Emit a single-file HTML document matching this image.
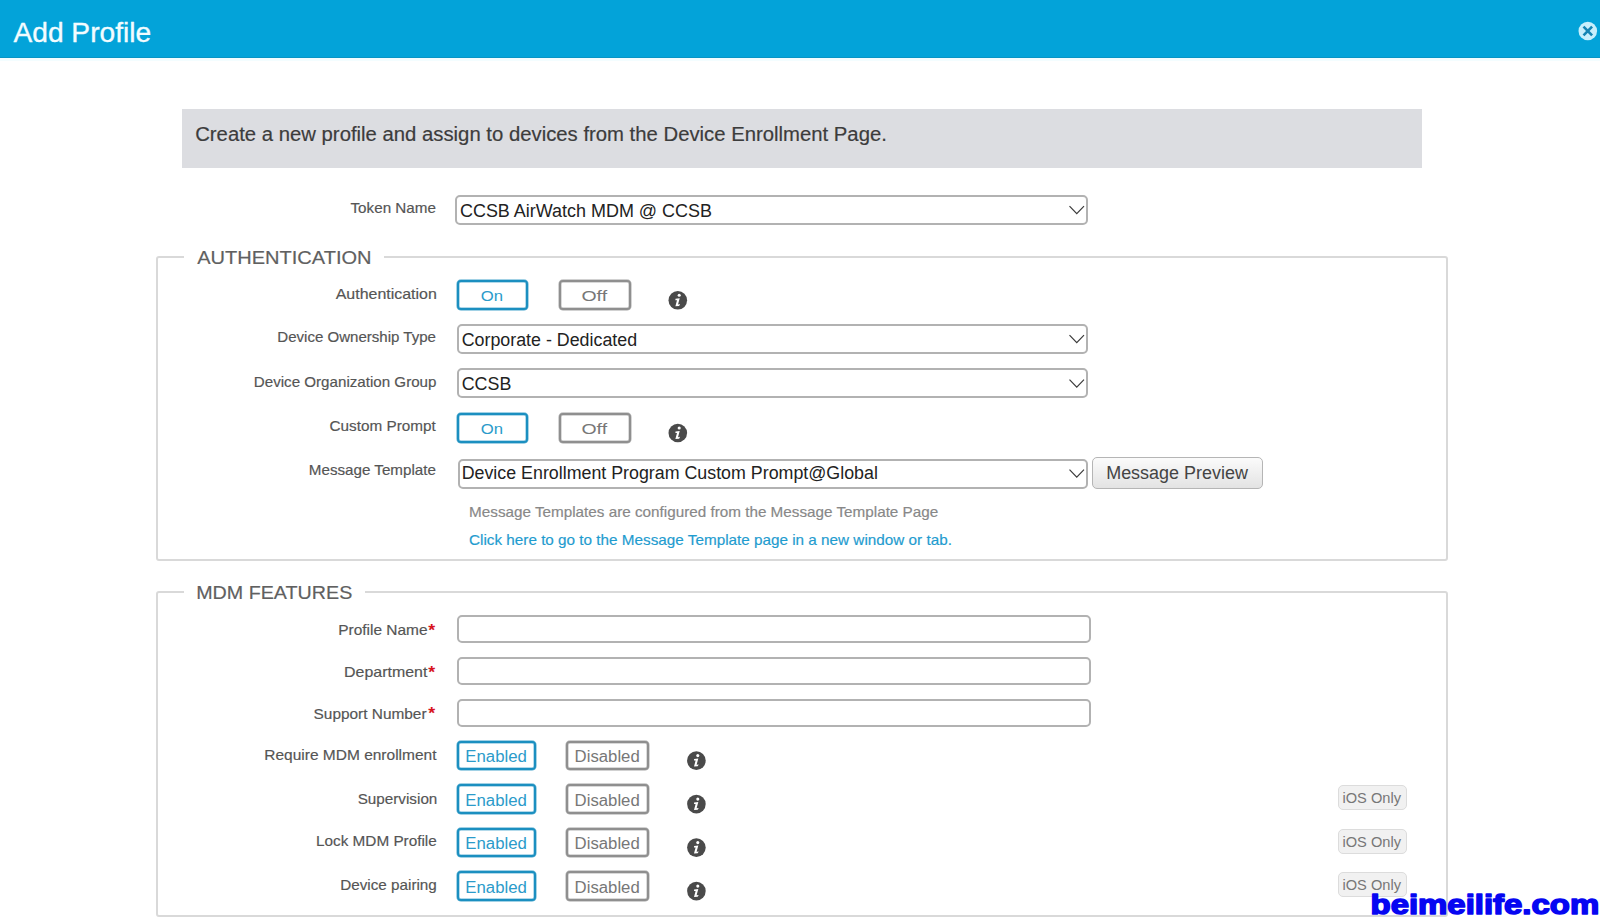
<!DOCTYPE html>
<html><head><meta charset="utf-8"><title>Add Profile</title><style>
html,body{margin:0;padding:0;width:1600px;height:920px;overflow:hidden;background:#fff;position:relative;font-family:"Liberation Sans",sans-serif}
.hdr{position:absolute;left:0;top:0;width:1600px;height:58px;background:#03a3d9;box-sizing:border-box;border-bottom:1px solid #0894c4}
.glow{position:absolute;left:0;top:58px;width:1600px;height:3px;background:#f3fdff}
.banner{position:absolute;left:182px;top:108.5px;width:1239.5px;height:59px;background:#dcdde1}
.sel,.inp{position:absolute;box-sizing:border-box;border:2px solid #b2b2b2;border-radius:5px;background:#fff}
.fs{position:absolute;box-sizing:border-box;border:2px solid #d9d9d9;border-radius:3px}
.gap{position:absolute;background:#fff}
.tg{position:absolute;box-sizing:border-box;border:2px solid #8f8f8f;border-radius:4px;background:#fff;box-shadow:0 0 0 0.7px rgba(143,143,143,.55),inset 0 0 0 0.7px rgba(143,143,143,.45)}
.tg.on{border-color:#1b8fc0;box-shadow:0 0 0 0.7px rgba(27,143,192,.55),inset 0 0 0 0.7px rgba(27,143,192,.45)}
.btn{position:absolute;box-sizing:border-box;border:1.5px solid #b5b5b5;border-radius:5px;background:linear-gradient(#fbfbfb,#e3e3e3)}
.ios{position:absolute;box-sizing:border-box;border:1.5px solid #dcdcdc;border-radius:5px;background:#f1f1f1}
svg.ov{position:absolute;left:0;top:0}
</style></head><body>
<div class="hdr"></div><div class="glow"></div>
<div class="banner"></div>
<div class="sel" style="left:455.3px;top:195px;width:633.2px;height:30.3px"></div>
<div class="sel" style="left:457.4px;top:324px;width:631px;height:30px"></div>
<div class="sel" style="left:457.4px;top:368.2px;width:631px;height:30.2px"></div>
<div class="sel" style="left:457.5px;top:458.5px;width:630.5px;height:30px"></div>
<div class="btn" style="left:1092px;top:456.5px;width:170.5px;height:32.5px"></div>
<div class="inp" style="left:457px;top:615px;width:634px;height:28px"></div>
<div class="inp" style="left:457px;top:657px;width:634px;height:28px"></div>
<div class="inp" style="left:457px;top:699px;width:634px;height:28px"></div>
<div class="fs" style="left:155.5px;top:256px;width:1292.5px;height:305px"></div>
<div class="gap" style="left:184px;top:250px;width:200px;height:12px"></div>
<div class="fs" style="left:155.5px;top:591px;width:1292.5px;height:326px"></div>
<div class="gap" style="left:184px;top:585px;width:181px;height:12px"></div>
<div class="tg on" style="left:457.1px;top:280px;width:71px;height:30px"></div>
<div class="tg off" style="left:559.4px;top:280px;width:71.5px;height:30px"></div>
<div class="tg on" style="left:457.1px;top:412.7px;width:71px;height:30px"></div>
<div class="tg off" style="left:559.4px;top:412.7px;width:71.5px;height:30px"></div>
<div class="tg on" style="left:457.1px;top:740.6px;width:78.6px;height:29.9px"></div>
<div class="tg off" style="left:566.4px;top:740.7px;width:82.9px;height:29.7px"></div>
<div class="tg on" style="left:457.1px;top:784.1px;width:78.6px;height:29.9px"></div>
<div class="tg off" style="left:566.4px;top:784.2px;width:82.9px;height:29.7px"></div>
<div class="tg on" style="left:457.1px;top:827.6px;width:78.6px;height:29.9px"></div>
<div class="tg off" style="left:566.4px;top:827.7px;width:82.9px;height:29.7px"></div>
<div class="tg on" style="left:457.1px;top:871.1px;width:78.6px;height:29.9px"></div>
<div class="tg off" style="left:566.4px;top:871.2px;width:82.9px;height:29.7px"></div>
<div class="ios" style="left:1338.4px;top:785.3px;width:68.2px;height:25px"></div>
<div class="ios" style="left:1338.4px;top:828.8px;width:68.2px;height:25px"></div>
<div class="ios" style="left:1338.4px;top:872.3px;width:68.2px;height:25px"></div>
<svg class="ov" width="1600" height="920" viewBox="0 0 1600 920" font-family="Liberation Sans">
<path d="M1069.5 206.2 L1076.75 213.6 L1084 206.2" fill="none" stroke="#3a3a3a" stroke-width="1.2"/>
<path d="M1069.5 335.2 L1076.75 342.6 L1084 335.2" fill="none" stroke="#3a3a3a" stroke-width="1.2"/>
<path d="M1069.5 379.7 L1076.75 387.1 L1084 379.7" fill="none" stroke="#3a3a3a" stroke-width="1.2"/>
<path d="M1069.5 469.7 L1076.75 477.1 L1084 469.7" fill="none" stroke="#3a3a3a" stroke-width="1.2"/>
<g transform="translate(677.8,300.3)"><circle r="9.3" fill="#4a4a4a"/><circle cx="1.4" cy="-5" r="1.55" fill="#fff"/><path d="M-2.3 -1.6 L1.9 -2.1 L0.2 4.2 L2.3 3.8 L1.3 5.7 L-2.4 6 L-0.8 0 L-2.4 0 Z" fill="#fff"/></g>
<g transform="translate(677.8,433)"><circle r="9.3" fill="#4a4a4a"/><circle cx="1.4" cy="-5" r="1.55" fill="#fff"/><path d="M-2.3 -1.6 L1.9 -2.1 L0.2 4.2 L2.3 3.8 L1.3 5.7 L-2.4 6 L-0.8 0 L-2.4 0 Z" fill="#fff"/></g>
<g transform="translate(696.4,760.6)"><circle r="9.3" fill="#4a4a4a"/><circle cx="1.4" cy="-5" r="1.55" fill="#fff"/><path d="M-2.3 -1.6 L1.9 -2.1 L0.2 4.2 L2.3 3.8 L1.3 5.7 L-2.4 6 L-0.8 0 L-2.4 0 Z" fill="#fff"/></g>
<g transform="translate(696.4,804.1)"><circle r="9.3" fill="#4a4a4a"/><circle cx="1.4" cy="-5" r="1.55" fill="#fff"/><path d="M-2.3 -1.6 L1.9 -2.1 L0.2 4.2 L2.3 3.8 L1.3 5.7 L-2.4 6 L-0.8 0 L-2.4 0 Z" fill="#fff"/></g>
<g transform="translate(696.4,847.6)"><circle r="9.3" fill="#4a4a4a"/><circle cx="1.4" cy="-5" r="1.55" fill="#fff"/><path d="M-2.3 -1.6 L1.9 -2.1 L0.2 4.2 L2.3 3.8 L1.3 5.7 L-2.4 6 L-0.8 0 L-2.4 0 Z" fill="#fff"/></g>
<g transform="translate(696.4,891.1)"><circle r="9.3" fill="#4a4a4a"/><circle cx="1.4" cy="-5" r="1.55" fill="#fff"/><path d="M-2.3 -1.6 L1.9 -2.1 L0.2 4.2 L2.3 3.8 L1.3 5.7 L-2.4 6 L-0.8 0 L-2.4 0 Z" fill="#fff"/></g>
<g transform="translate(1587.8,31)"><circle r="9.3" fill="#c8effc"/><path d="M-4.3 -4.3 L4.3 4.3 M4.3 -4.3 L-4.3 4.3" stroke="#1585b4" stroke-width="2.6"/></g>
<text x="13.50" y="42" font-size="27" fill="#f2fcff" stroke="#f2fcff" stroke-width="0.35" stroke-linejoin="round" textLength="137.62" lengthAdjust="spacingAndGlyphs">Add Profile</text>
<text x="195.21" y="141" font-size="19.5" fill="#3c3c3c" stroke="#3c3c3c" stroke-width="0.18" stroke-linejoin="round" textLength="691.69" lengthAdjust="spacingAndGlyphs">Create a new profile and assign to devices from the Device Enrollment Page.</text>
<text x="350.50" y="213" font-size="14.6" fill="#555" stroke="#555" stroke-width="0.18" stroke-linejoin="round" textLength="85.48" lengthAdjust="spacingAndGlyphs">Token Name</text>
<text x="459.98" y="216.5" font-size="17.6" fill="#222" textLength="251.98" lengthAdjust="spacingAndGlyphs">CCSB AirWatch MDM @ CCSB</text>
<text x="197.20" y="264" font-size="19.2" fill="#606060" stroke="#606060" stroke-width="0.18" stroke-linejoin="round" textLength="174.34" lengthAdjust="spacingAndGlyphs">AUTHENTICATION</text>
<text x="335.70" y="298.5" font-size="14.8" fill="#555" stroke="#555" stroke-width="0.18" stroke-linejoin="round" textLength="101.14" lengthAdjust="spacingAndGlyphs">Authentication</text>
<text x="480.87" y="300.8" font-size="14.8" fill="#2b9bca" textLength="22.27" lengthAdjust="spacingAndGlyphs">On</text>
<text x="581.48" y="300.8" font-size="14.8" fill="#777" textLength="25.62" lengthAdjust="spacingAndGlyphs">Off</text>
<text x="480.87" y="433.5" font-size="14.8" fill="#2b9bca" textLength="22.27" lengthAdjust="spacingAndGlyphs">On</text>
<text x="581.48" y="433.5" font-size="14.8" fill="#777" textLength="25.62" lengthAdjust="spacingAndGlyphs">Off</text>
<text x="277.28" y="342.2" font-size="14.8" fill="#555" stroke="#555" stroke-width="0.18" stroke-linejoin="round" textLength="158.72" lengthAdjust="spacingAndGlyphs">Device Ownership Type</text>
<text x="461.69" y="345.5" font-size="17.6" fill="#222" textLength="175.44" lengthAdjust="spacingAndGlyphs">Corporate - Dedicated</text>
<text x="253.78" y="386.5" font-size="14.8" fill="#555" stroke="#555" stroke-width="0.18" stroke-linejoin="round" textLength="182.72" lengthAdjust="spacingAndGlyphs">Device Organization Group</text>
<text x="461.69" y="390" font-size="17.6" fill="#222" textLength="49.62" lengthAdjust="spacingAndGlyphs">CCSB</text>
<text x="329.57" y="430.9" font-size="14.8" fill="#555" stroke="#555" stroke-width="0.18" stroke-linejoin="round" textLength="106.22" lengthAdjust="spacingAndGlyphs">Custom Prompt</text>
<text x="308.87" y="474.9" font-size="14.8" fill="#555" stroke="#555" stroke-width="0.18" stroke-linejoin="round" textLength="127.06" lengthAdjust="spacingAndGlyphs">Message Template</text>
<text x="461.69" y="479" font-size="17.6" fill="#222" textLength="416.16" lengthAdjust="spacingAndGlyphs">Device Enrollment Program Custom Prompt@Global</text>
<text x="1106.18" y="478.7" font-size="17.6" fill="#444" textLength="141.68" lengthAdjust="spacingAndGlyphs">Message Preview</text>
<text x="469.07" y="517.1" font-size="14.8" fill="#888" stroke="#888" stroke-width="0.18" stroke-linejoin="round" textLength="469.16" lengthAdjust="spacingAndGlyphs">Message Templates are configured from the Message Template Page</text>
<text x="468.97" y="545.4" font-size="14.8" fill="#1f9ccf" stroke="#1f9ccf" stroke-width="0.18" stroke-linejoin="round" textLength="482.91" lengthAdjust="spacingAndGlyphs">Click here to go to the Message Template page in a new window or tab.</text>
<text x="196.17" y="599" font-size="19.2" fill="#606060" stroke="#606060" stroke-width="0.18" stroke-linejoin="round" textLength="156.13" lengthAdjust="spacingAndGlyphs">MDM FEATURES</text>
<text x="338.26" y="635.4" font-size="14.8" fill="#555" stroke="#555" stroke-width="0.18" stroke-linejoin="round" textLength="89.30" lengthAdjust="spacingAndGlyphs">Profile Name</text>
<text x="344.12" y="677.2" font-size="14.8" fill="#555" stroke="#555" stroke-width="0.18" stroke-linejoin="round" textLength="83.21" lengthAdjust="spacingAndGlyphs">Department</text>
<text x="313.56" y="718.9" font-size="14.8" fill="#555" stroke="#555" stroke-width="0.18" stroke-linejoin="round" textLength="113.00" lengthAdjust="spacingAndGlyphs">Support Number</text>
<text x="428.20" y="635.9" font-size="17" font-weight="700" fill="#d7141e" textLength="6.91" lengthAdjust="spacingAndGlyphs">*</text>
<text x="428.20" y="677.7" font-size="17" font-weight="700" fill="#d7141e" textLength="6.91" lengthAdjust="spacingAndGlyphs">*</text>
<text x="428.20" y="719.4" font-size="17" font-weight="700" fill="#d7141e" textLength="6.91" lengthAdjust="spacingAndGlyphs">*</text>
<text x="264.25" y="760" font-size="14.8" fill="#555" stroke="#555" stroke-width="0.18" stroke-linejoin="round" textLength="172.24" lengthAdjust="spacingAndGlyphs">Require MDM enrollment</text>
<text x="465.32" y="762.0" font-size="15.6" fill="#2b9bca" textLength="61.61" lengthAdjust="spacingAndGlyphs">Enabled</text>
<text x="574.63" y="762.0" font-size="15.6" fill="#777" textLength="65.11" lengthAdjust="spacingAndGlyphs">Disabled</text>
<text x="357.67" y="803.5" font-size="14.8" fill="#555" stroke="#555" stroke-width="0.18" stroke-linejoin="round" textLength="79.70" lengthAdjust="spacingAndGlyphs">Supervision</text>
<text x="465.32" y="805.5" font-size="15.6" fill="#2b9bca" textLength="61.61" lengthAdjust="spacingAndGlyphs">Enabled</text>
<text x="574.63" y="805.5" font-size="15.6" fill="#777" textLength="65.11" lengthAdjust="spacingAndGlyphs">Disabled</text>
<text x="1342.47" y="803.2" font-size="14.2" fill="#777" textLength="58.49" lengthAdjust="spacingAndGlyphs">iOS Only</text>
<text x="315.97" y="846.4" font-size="14.8" fill="#555" stroke="#555" stroke-width="0.18" stroke-linejoin="round" textLength="120.83" lengthAdjust="spacingAndGlyphs">Lock MDM Profile</text>
<text x="465.32" y="849.0" font-size="15.6" fill="#2b9bca" textLength="61.61" lengthAdjust="spacingAndGlyphs">Enabled</text>
<text x="574.63" y="849.0" font-size="15.6" fill="#777" textLength="65.11" lengthAdjust="spacingAndGlyphs">Disabled</text>
<text x="1342.47" y="846.7" font-size="14.2" fill="#777" textLength="58.49" lengthAdjust="spacingAndGlyphs">iOS Only</text>
<text x="340.27" y="890.4" font-size="14.8" fill="#555" stroke="#555" stroke-width="0.18" stroke-linejoin="round" textLength="96.52" lengthAdjust="spacingAndGlyphs">Device pairing</text>
<text x="465.32" y="892.5" font-size="15.6" fill="#2b9bca" textLength="61.61" lengthAdjust="spacingAndGlyphs">Enabled</text>
<text x="574.63" y="892.5" font-size="15.6" fill="#777" textLength="65.11" lengthAdjust="spacingAndGlyphs">Disabled</text>
<text x="1342.47" y="890.2" font-size="14.2" fill="#777" textLength="58.49" lengthAdjust="spacingAndGlyphs">iOS Only</text>
<text x="1370.54" y="913.6" font-size="27.1" font-weight="700" fill="#0606f2" stroke="#0606f2" stroke-width="1.5" stroke-linejoin="round" textLength="228.65" lengthAdjust="spacingAndGlyphs">beimeilife.com</text>
</svg>
</body></html>
